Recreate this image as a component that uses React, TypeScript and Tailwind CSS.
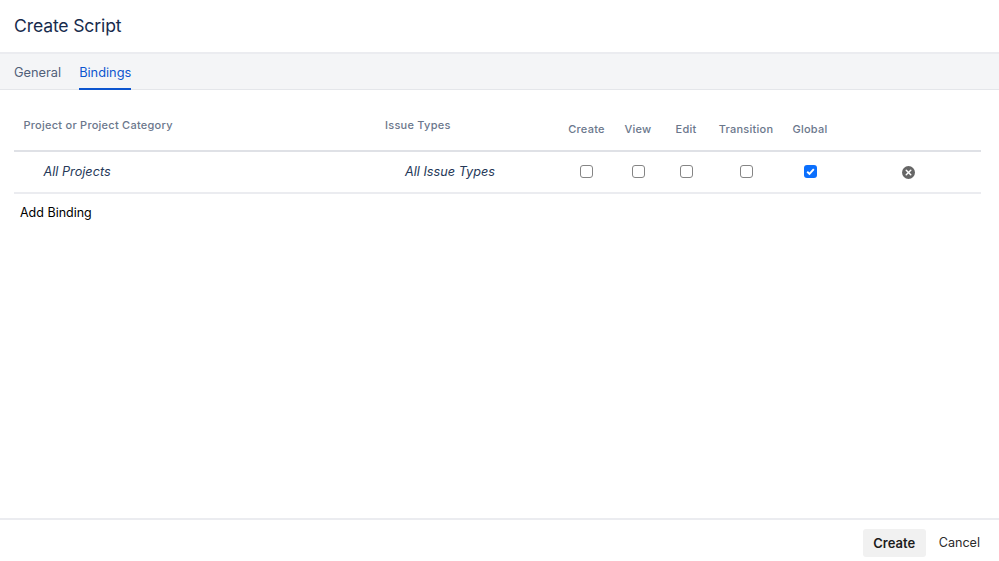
import { X } from "lucide-react";

const permissions = [
  { label: "Create", width: "w-[51px]", checked: false },
  { label: "View", width: "w-[52px]", checked: false },
  { label: "Edit", width: "w-[44px]", checked: false },
  { label: "Transition", width: "w-[76px]", checked: false },
  { label: "Global", width: "w-[52px]", checked: true },
];

const Checkbox = ({ checked }: { checked: boolean }) =>
  checked ? (
    <div className="w-[13px] h-[13px] rounded-[3px] bg-[#0b6ffd] flex items-center justify-center">
      <svg viewBox="0 0 13 13" className="w-[13px] h-[13px]" fill="none">
        <path d="M3.2 6.8 5.5 9 9.8 4.2" stroke="white" strokeWidth="1.9" />
      </svg>
    </div>
  ) : (
    <div className="w-[13px] h-[13px] rounded-[3px] border border-[#858585] bg-white" />
  );

export default function App() {
  return (
    <div className="w-[999px] h-[561px] flex flex-col bg-white overflow-hidden font-['Inter',sans-serif]">
      <div className="h-[54px] shrink-0 flex items-center px-[14px] border-b-2 border-[#ebecf0]">
        <h1 className="text-[17.6px] text-[#172b4d] font-normal leading-none tracking-[-0.15px]">Create Script</h1>
      </div>

      <div className="h-[36px] shrink-0 flex gap-[18px] px-[14px] bg-[#f4f5f7] border-b border-[#e4e6ea]">
        <div className="text-[12.8px] text-[#505f79] leading-[37px] h-[36px]">General</div>
        <div className="text-[12.8px] text-[#0c55cf] leading-[37px] h-[36px] border-b-2 border-[#0c55cf]">Bindings</div>
      </div>

      <div className="flex-1 px-[14px] pr-[18px]">
        <div className="h-[62px] flex border-b-2 border-[#dfe1e6] text-[11px] font-medium text-[#6b778c] tracking-[0.25px]">
          <div className="w-[361px] pl-[9.5px] pt-[29px] leading-[13px]">Project or Project Category</div>
          <div className="w-[186px] pl-[10px] pt-[29px] leading-[13px]">Issue Types</div>
          {permissions.map((p) => (
            <div key={p.label} className={`${p.width} text-center pt-[33px] leading-[13px]`}>
              {p.label}
            </div>
          ))}
        </div>

        <div className="h-[42px] flex items-center border-b-2 border-[#ebecf0] text-[12.7px] italic text-[#253858]">
          <div className="w-[361px] pl-[29.5px]">All Projects</div>
          <div className="w-[186px] pl-[30px]">All Issue Types</div>
          {permissions.map((p) => (
            <div key={p.label} className={`${p.width} flex justify-center -mt-[2px]`}>
              <Checkbox checked={p.checked} />
            </div>
          ))}
          <div className="flex-1 flex justify-center">
            <div className="w-[13px] h-[13px] rounded-full bg-[#666666] flex items-center justify-center">
              <X className="w-[9px] h-[9px] text-white" strokeWidth={4} />
            </div>
          </div>
        </div>

        <div className="pl-[6px] pt-[11px] text-[12.5px] leading-[16px] text-black">Add Binding</div>
      </div>

      <div className="h-[43px] shrink-0 flex items-start justify-end border-t-2 border-[#ebecf0] pt-[9px] pr-[19px]">
        <button className="w-[63px] h-[28px] pt-[1px] rounded-[3px] bg-[#f1f1f1] text-[13px] font-semibold text-[#1c1c1c]">Create</button>
        <button className="ml-[13px] h-[28px] pt-[1px] text-[12.6px] text-[#2b2b2b]">Cancel</button>
      </div>
    </div>
  );
}
